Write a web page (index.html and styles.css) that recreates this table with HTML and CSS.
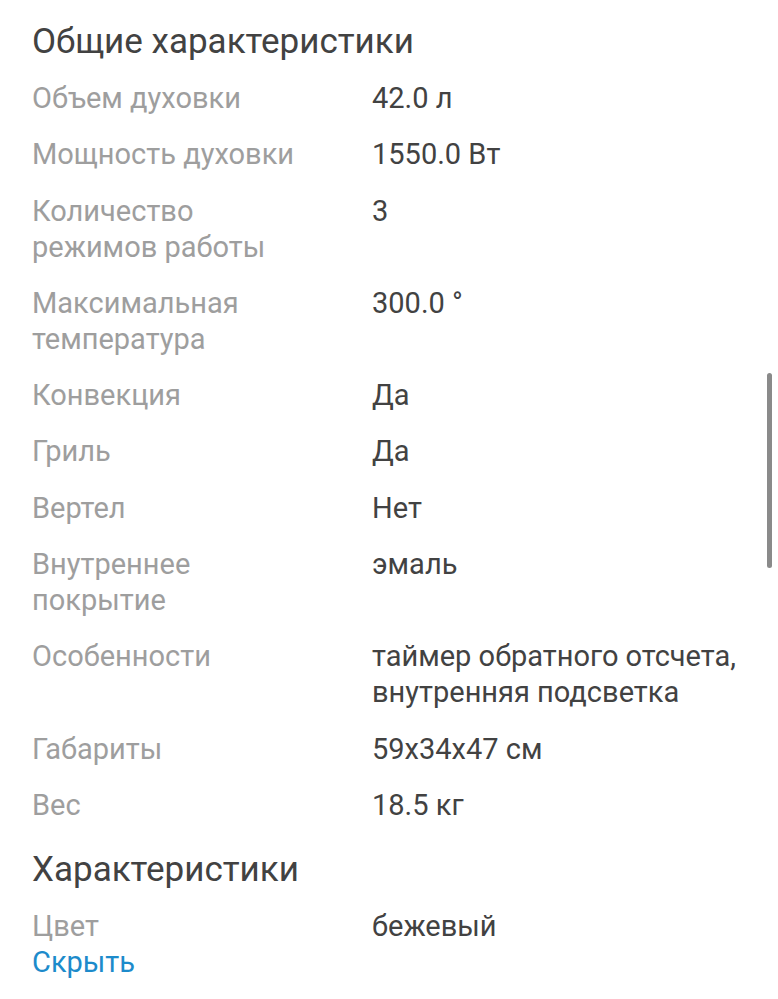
FILE: index.html
```html
<!DOCTYPE html>
<html lang="ru">
<head>
<meta charset="utf-8">
<title>Характеристики</title>
<link rel="stylesheet" href="styles.css">
</head>
<body>
<main class="page">
  <section class="section">
    <h2 class="section-title">Общие характеристики</h2>
    <dl class="specs">
      <dt>Объем духовки</dt><dd>42.0 л</dd>
      <dt>Мощность духовки</dt><dd>1550.0 Вт</dd>
      <dt>Количество режимов работы</dt><dd>3</dd>
      <dt>Максимальная температура</dt><dd>300.0 °</dd>
      <dt>Конвекция</dt><dd>Да</dd>
      <dt>Гриль</dt><dd>Да</dd>
      <dt>Вертел</dt><dd>Нет</dd>
      <dt>Внутреннее покрытие</dt><dd>эмаль</dd>
      <dt>Особенности</dt><dd>таймер обратного отсчета, внутренняя подсветка</dd>
      <dt>Габариты</dt><dd>59x34x47 см</dd>
      <dt>Вес</dt><dd>18.5 кг</dd>
    </dl>
  </section>
  <section class="section section-second">
    <h2 class="section-title">Характеристики</h2>
    <dl class="specs">
      <dt>Цвет</dt><dd>бежевый</dd>
    </dl>
    <a class="toggle" href="#">Скрыть</a>
  </section>
</main>
<div class="scrollbar"></div>
</body>
</html>
```
FILE: styles.css
```css
html, body {
  margin: 0;
  padding: 0;
  background: #ffffff;
}
body {
  font-family: Roboto, "Noto Sans", sans-serif;
  width: 778px;
  height: 999px;
  overflow: hidden;
  position: relative;
}
.page {
  padding: 22px 32px 0 32px;
}
.section-title {
  margin: 0;
  font-size: 35px;
  font-weight: 400;
  line-height: 40px;
  color: #424242;
}
.specs {
  margin: 18px 0 0 0;
  display: grid;
  grid-template-columns: 278px 1fr;
  column-gap: 62px;
  row-gap: 20.3px;
  font-size: 29px;
  line-height: 36px;
}
.specs dt {
  color: #9e9e9e;
}
.specs dd {
  margin: 0;
  color: #424242;
}
.section-second {
  margin-top: 27px;
}
.toggle {
  display: block;
  font-size: 29px;
  line-height: 36px;
  color: #1d8bcb;
  text-decoration: none;
}
.scrollbar {
  position: absolute;
  right: 6px;
  top: 373px;
  width: 5px;
  height: 195px;
  border-radius: 3px;
  background: #8a8a8a;
}
```
